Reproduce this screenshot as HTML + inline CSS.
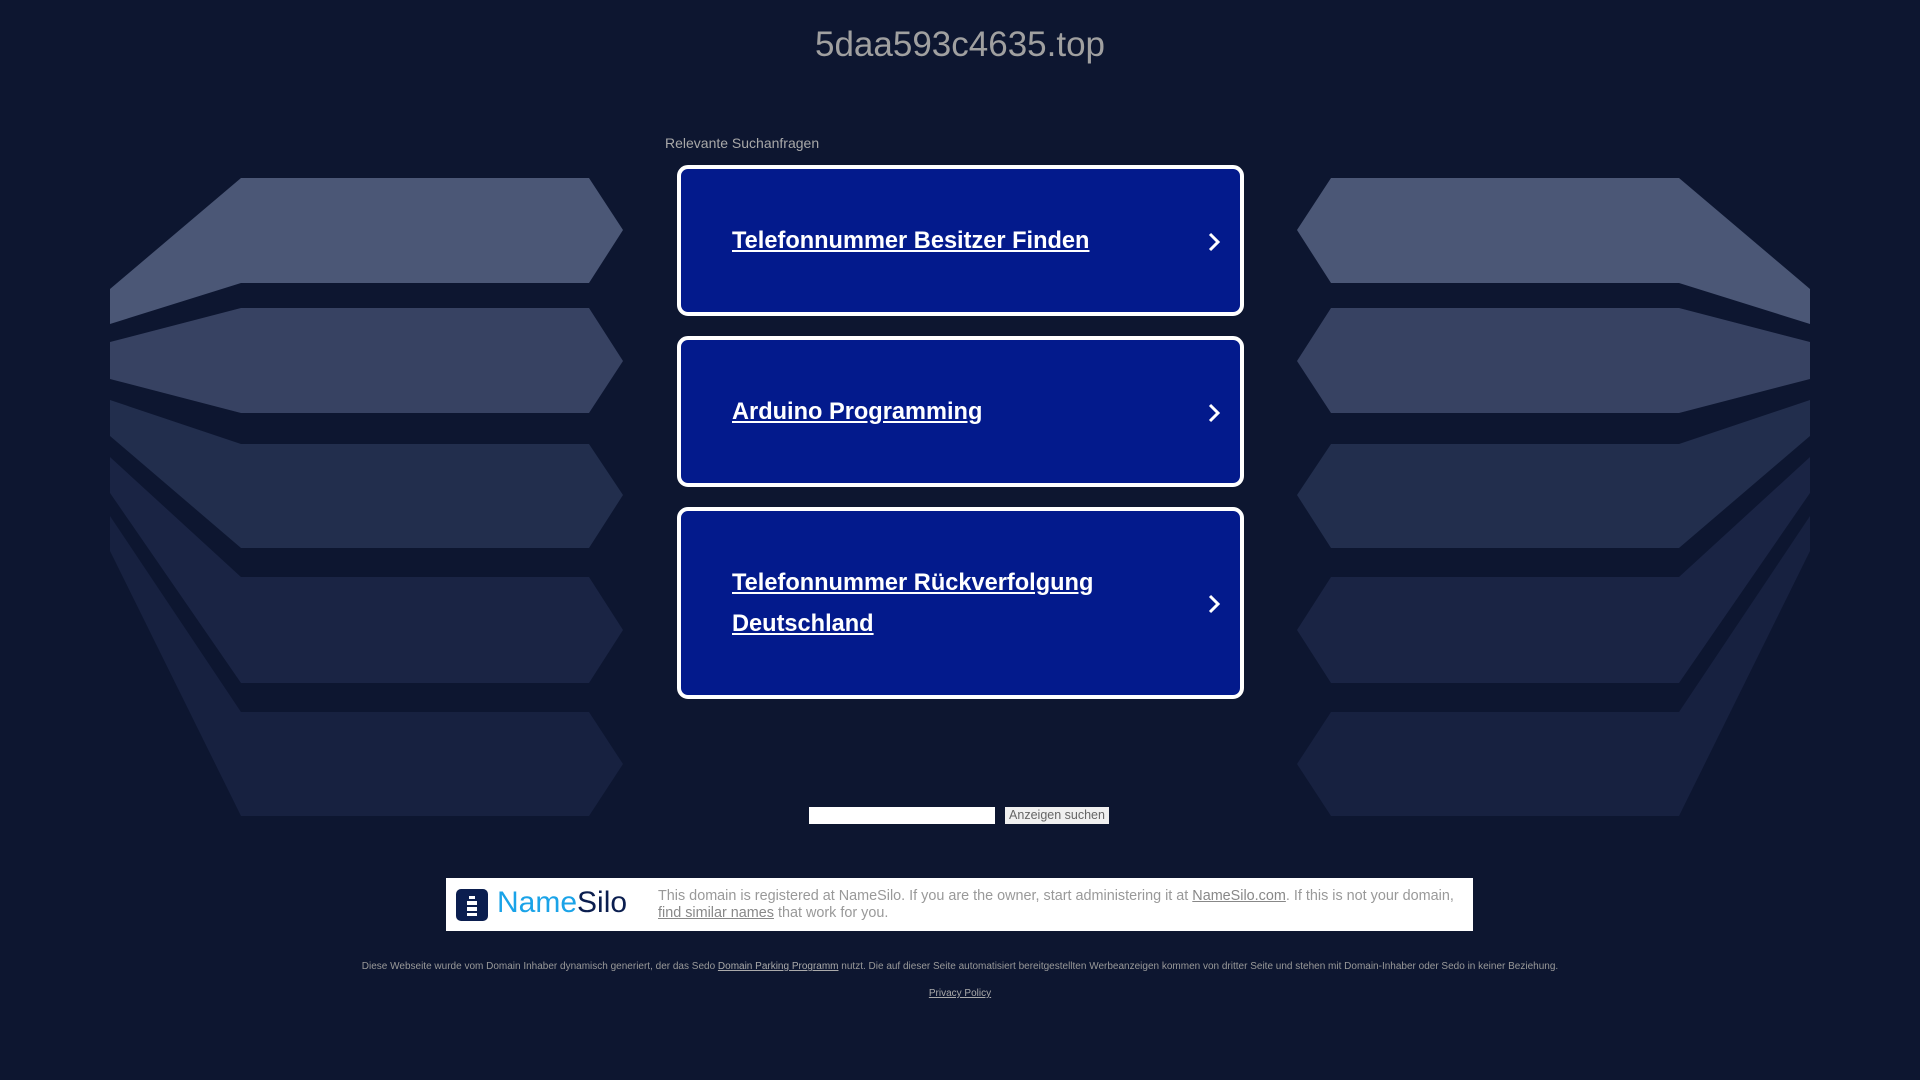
<!DOCTYPE html>
<html><head><meta charset="utf-8"><style>
html,body{margin:0;padding:0;width:1920px;height:1080px;overflow:hidden;background:#0d1630;font-family:"Liberation Sans",Arial,sans-serif}
svg.bg{position:absolute;left:0;top:0}
.title{position:absolute;top:25px;left:0;width:1920px;text-align:center;color:#a0a0a0;font-size:35px}
.rel{position:absolute;left:665px;top:135px;color:#a8a8a8;font-size:14px}
.card{position:absolute;left:677px;border:4px solid #fff;border-radius:11px;background:#031a8c;box-sizing:border-box;width:567px}
.card span{position:absolute;left:51px;color:#fff;font-weight:bold;font-size:23.6px;text-decoration:underline;line-height:41px;width:420px}
.card svg{position:absolute;left:525px}
.inp{position:absolute;left:809px;top:807px;width:186px;height:17px;background:#fff}
.btn{position:absolute;left:1005px;top:807px;width:104px;height:17px;background:#f0f0f0;color:#666;font-size:12.5px;text-align:center;line-height:17px}
.ns{position:absolute;left:446px;top:878px;width:1027px;height:53px;background:#fff}
.ns .t{position:absolute;left:212px;top:10px;color:#999;font-size:14.4px;line-height:17px;width:810px}
.ns a{color:#888;text-decoration:underline}
.foot{position:absolute;top:961px;left:0;width:1920px;text-align:center;color:#999;font-size:10px}
.foot a{color:#aaa;text-decoration:underline}
.pp{position:absolute;top:988px;left:0;width:1920px;text-align:center;font-size:10px}
.pp a{color:#aaa;text-decoration:underline}
</style></head><body>
<svg class="bg" width="1920" height="1080">
<g id="L">
<polygon fill="#4b5776" points="241,178 589,178 623,230 589,283 241,283 110,324 110,289"/>
<polygon fill="#374262" points="241,308 589,308 623,361 589,413 241,413 110,379 110,342"/>
<polygon fill="#222e4d" points="110,400 241,444 589,444 623,495 589,548 241,548 110,436"/>
<polygon fill="#1a2444" points="110,457 241,577 589,577 623,630 589,683 241,683 110,493"/>
<polygon fill="#172140" points="110,516 241,712 589,712 623,764 589,816 241,816 110,551"/>
</g>
<use href="#L" transform="translate(1920,0) scale(-1,1)"/>
</svg>
<div class="title">5daa593c4635.top</div>
<div class="rel">Relevante Suchanfragen</div>
<div class="card" style="top:165px;height:151px"><span style="top:52px">Telefonnummer Besitzer Finden</span><svg style="top:62px" width="16" height="22" viewBox="0 0 16 22"><path d="M4 3 L12 11 L4 19" fill="none" stroke="#fff" stroke-width="3"/></svg></div>
<div class="card" style="top:336px;height:151px"><span style="top:52px">Arduino Programming</span><svg style="top:62px" width="16" height="22" viewBox="0 0 16 22"><path d="M4 3 L12 11 L4 19" fill="none" stroke="#fff" stroke-width="3"/></svg></div>
<div class="card" style="top:507px;height:192px"><span style="top:52px">Telefonnummer Rückverfolgung Deutschland</span><svg style="top:82px" width="16" height="22" viewBox="0 0 16 22"><path d="M4 3 L12 11 L4 19" fill="none" stroke="#fff" stroke-width="3"/></svg></div>
<div class="inp"></div>
<div class="btn">Anzeigen suchen</div>
<div class="ns">
<svg style="position:absolute;left:10px;top:11px" width="32" height="32" viewBox="0 0 32 32"><rect x="0" y="0" width="32" height="32" rx="5" fill="#0b1e4f"/><path d="M13 7h6v3h-6z M11 12h10v4H11z M11 18h10v4H11z M11 24h10v3H11z" fill="#fff"/></svg>
<div style="position:absolute;left:51px;top:7px;font-size:30px;line-height:36px"><span style="color:#1aa3e8">Name</span><span style="color:#0b1e4f">Silo</span></div>
<div class="t">This domain is registered at NameSilo. If you are the owner, start administering it at <a>NameSilo.com</a>. If this is not your domain, <a>find similar names</a> that work for you.</div>
</div>
<div class="foot">Diese Webseite wurde vom Domain Inhaber dynamisch generiert, der das Sedo <a>Domain Parking Programm</a> nutzt. Die auf dieser Seite automatisiert bereitgestellten Werbeanzeigen kommen von dritter Seite und stehen mit Domain-Inhaber oder Sedo in keiner Beziehung.</div>
<div class="pp"><a>Privacy Policy</a></div>
</body></html>
